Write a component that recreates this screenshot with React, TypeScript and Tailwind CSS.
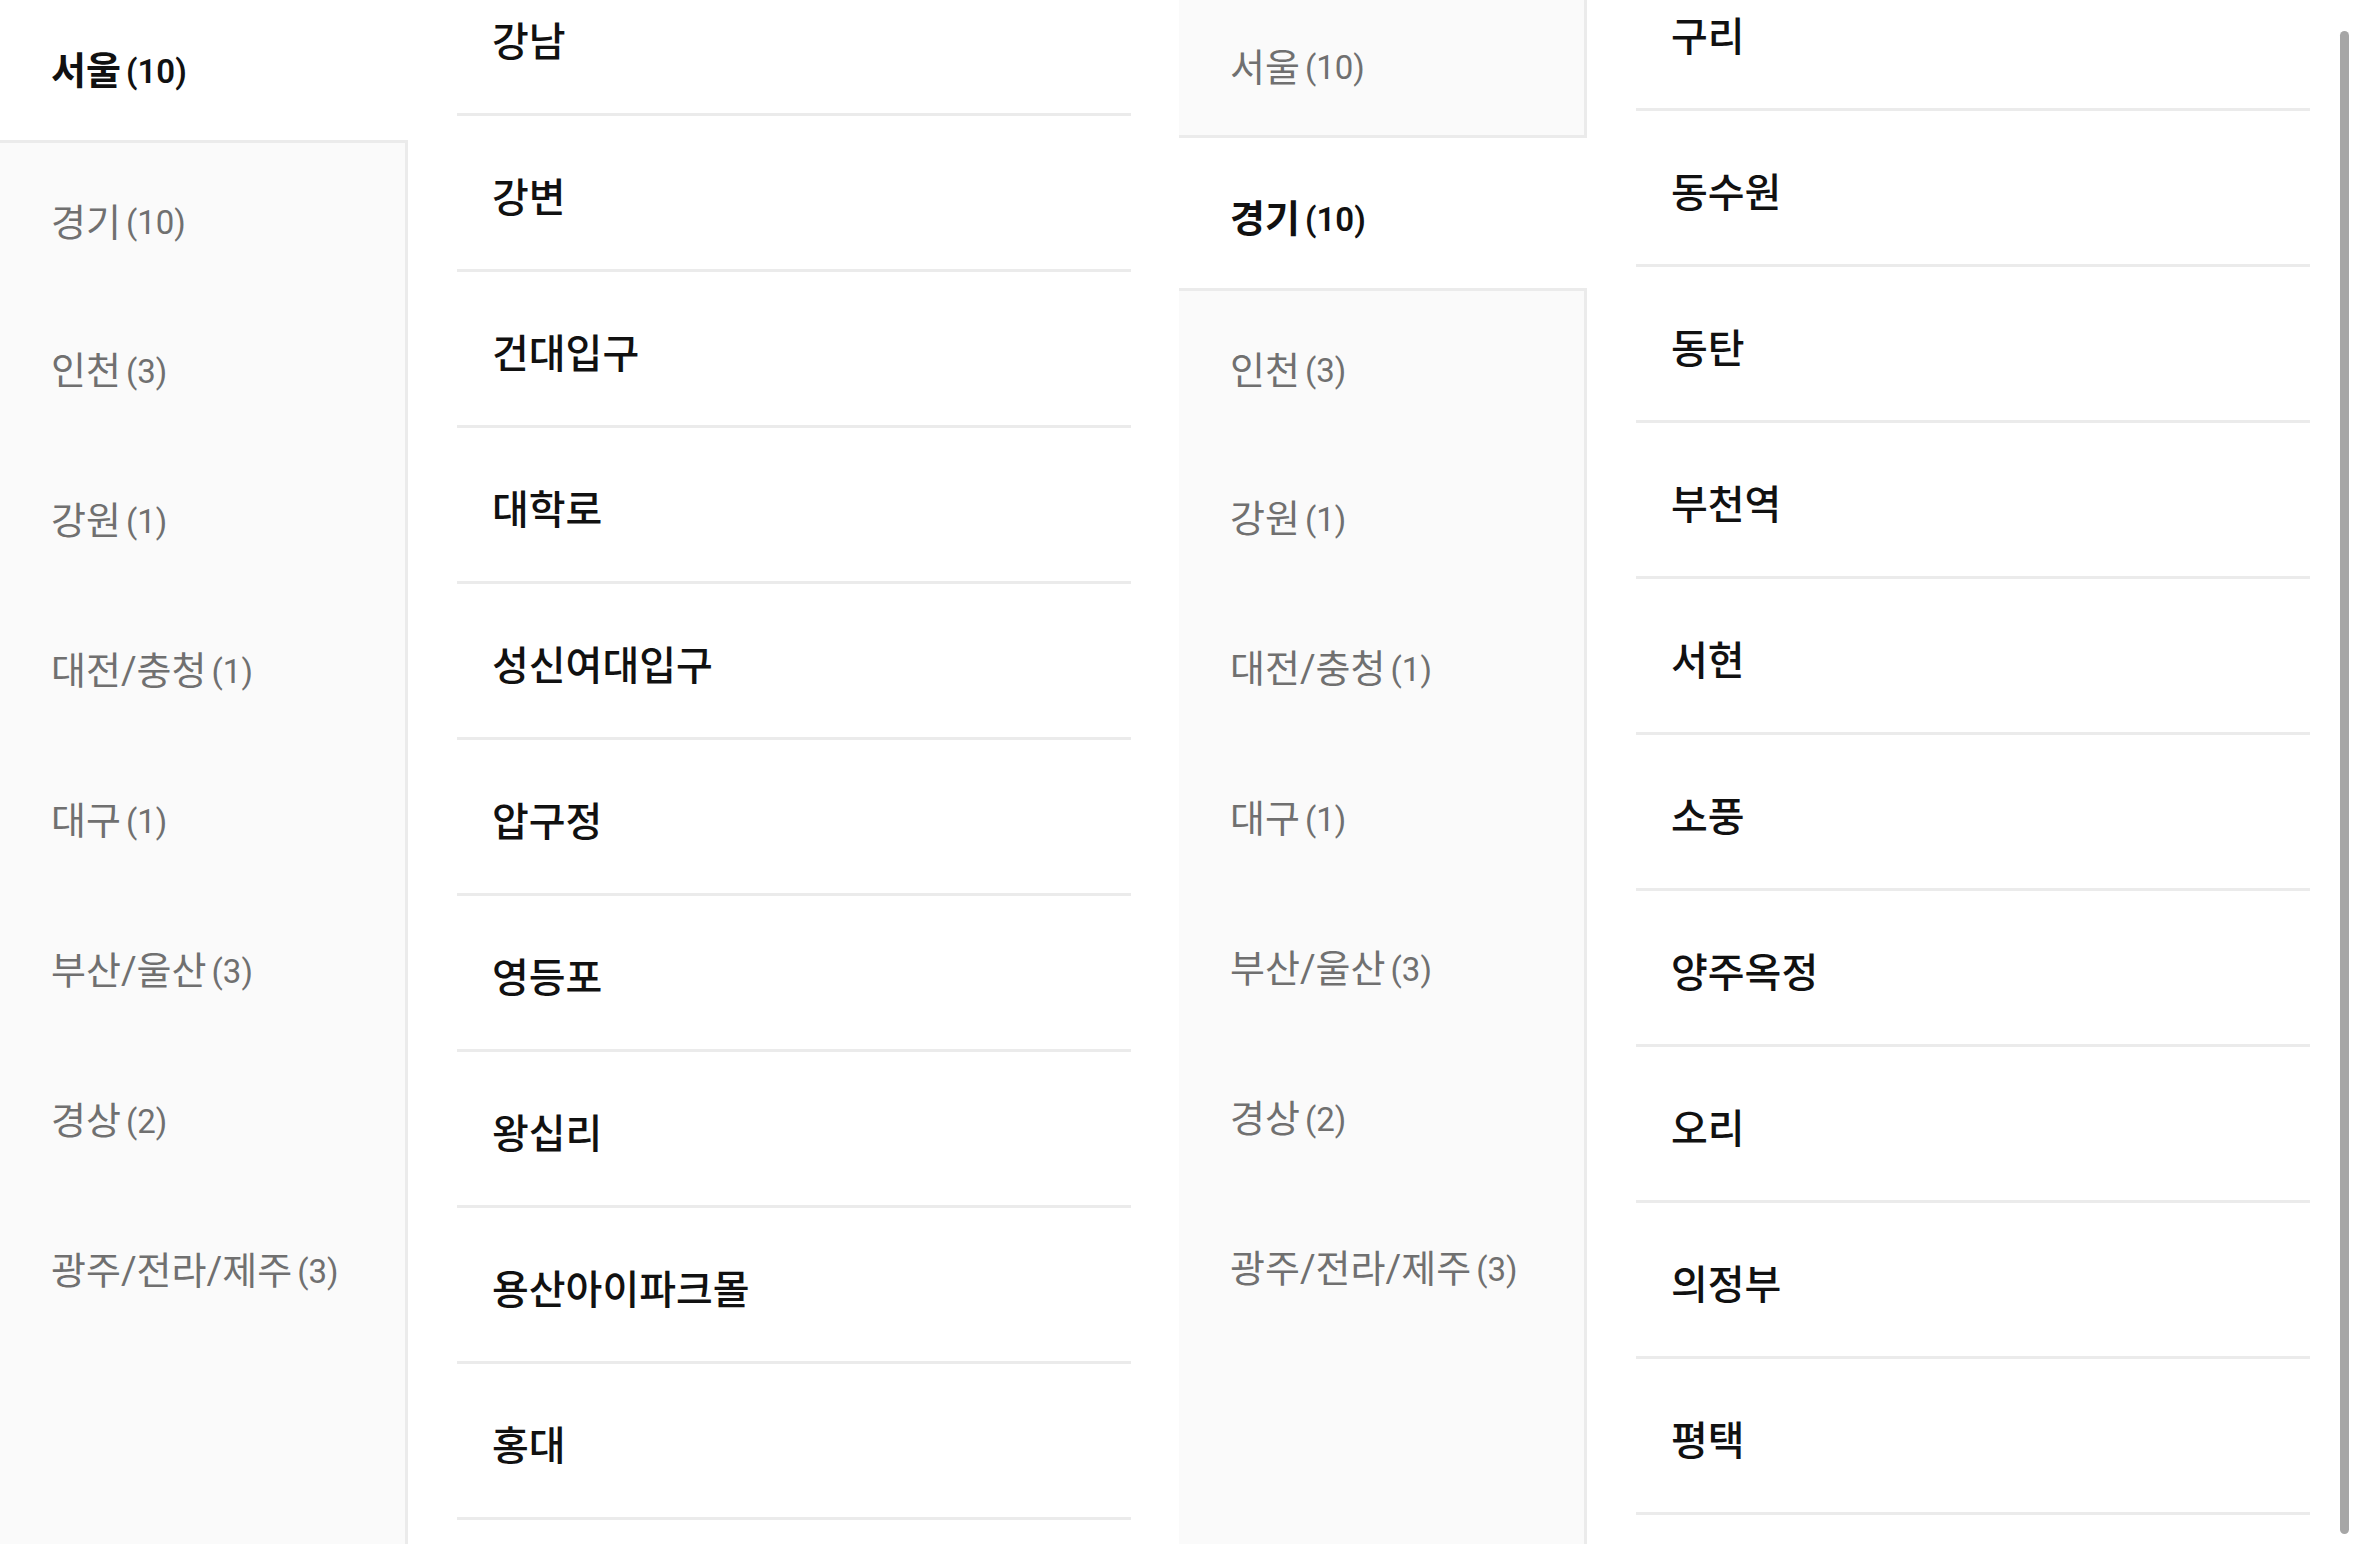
import React from 'react';

const regions = [
  { name: '서울', count: 10 },
  { name: '경기', count: 10 },
  { name: '인천', count: 3 },
  { name: '강원', count: 1 },
  { name: '대전/충청', count: 1 },
  { name: '대구', count: 1 },
  { name: '부산/울산', count: 3 },
  { name: '경상', count: 2 },
  { name: '광주/전라/제주', count: 3 },
];

const seoulShops = ['강남', '강변', '건대입구', '대학로', '성신여대입구', '압구정', '영등포', '왕십리', '용산아이파크몰', '홍대'];
const gyeonggiShops = ['구리', '동수원', '동탄', '부천역', '서현', '소풍', '양주옥정', '오리', '의정부', '평택'];

const font = { fontFamily: 'Roboto, "Noto Sans CJK KR", sans-serif' };

function Sidebar({ active }: { active: number }) {
  return (
    <div className="flex w-[408px] shrink-0 flex-col">
      {regions.map((r, i) => {
        const isActive = i === active;
        return (
          <div
            key={r.name}
            className={
              isActive
                ? 'flex h-[150px] shrink-0 items-center bg-white pt-[12px] pl-[51px]'
                : i === active - 1
                  ? 'flex h-[150px] shrink-0 items-center border-r-[3px] border-b-[3px] border-[#ebebeb] bg-[#fafafa] pt-[12px] pl-[51px]'
                  : i === active + 1
                    ? 'flex h-[150px] shrink-0 items-center border-r-[3px] border-t-[3px] border-[#ebebeb] bg-[#fafafa] pt-[12px] pl-[51px]'
                    : 'flex h-[150px] shrink-0 items-center border-r-[3px] border-[#ebebeb] bg-[#fafafa] pt-[12px] pl-[51px]'
            }
          >
            <span className={isActive ? 'text-[38px] leading-none font-semibold text-[#111111]' : 'text-[38px] leading-none font-normal text-[#707070]'}>
              {r.name}
            </span>
            <span className={isActive ? 'ml-[5px] text-[33px] leading-none font-semibold text-[#111111]' : 'ml-[5px] text-[33px] leading-none text-[#707070]'}>
              ({r.count})
            </span>
          </div>
        );
      })}
      <div className="flex-1 border-r-[3px] border-[#ebebeb] bg-[#fafafa]" />
    </div>
  );
}

function ShopList({ shops }: { shops: string[] }) {
  return (
    <div className="ml-[49px] flex w-[674px] shrink-0 flex-col">
      {shops.map((s) => (
        <div key={s} className="flex h-[156px] shrink-0 items-center border-b-[3px] border-[#ebebeb] pt-[12px] pl-[35px]">
          <span className="text-[40px] leading-none font-medium text-[#111111]">{s}</span>
        </div>
      ))}
    </div>
  );
}

export default function App() {
  return (
    <div className="flex h-[1544px] w-[2358px] overflow-hidden bg-white" style={font}>
      {/* 서울 selected */}
      <div className="-mt-[10px] flex h-[1560px] shrink-0">
        <Sidebar active={0} />
        <div className="-mt-[30px]">
          <ShopList shops={seoulShops} />
        </div>
      </div>

      {/* 경기 selected */}
      <div className="-mt-[12px] ml-[48px] flex h-[1564px] shrink-0">
        <Sidebar active={1} />
        <div className="-mt-[33px]">
          <ShopList shops={gyeonggiShops} />
        </div>
      </div>

      {/* scrollbar */}
      <div className="mt-[31px] ml-[30px] h-[1503px] w-[9px] shrink-0 rounded-full bg-[#a6a6a6]" />
    </div>
  );
}
